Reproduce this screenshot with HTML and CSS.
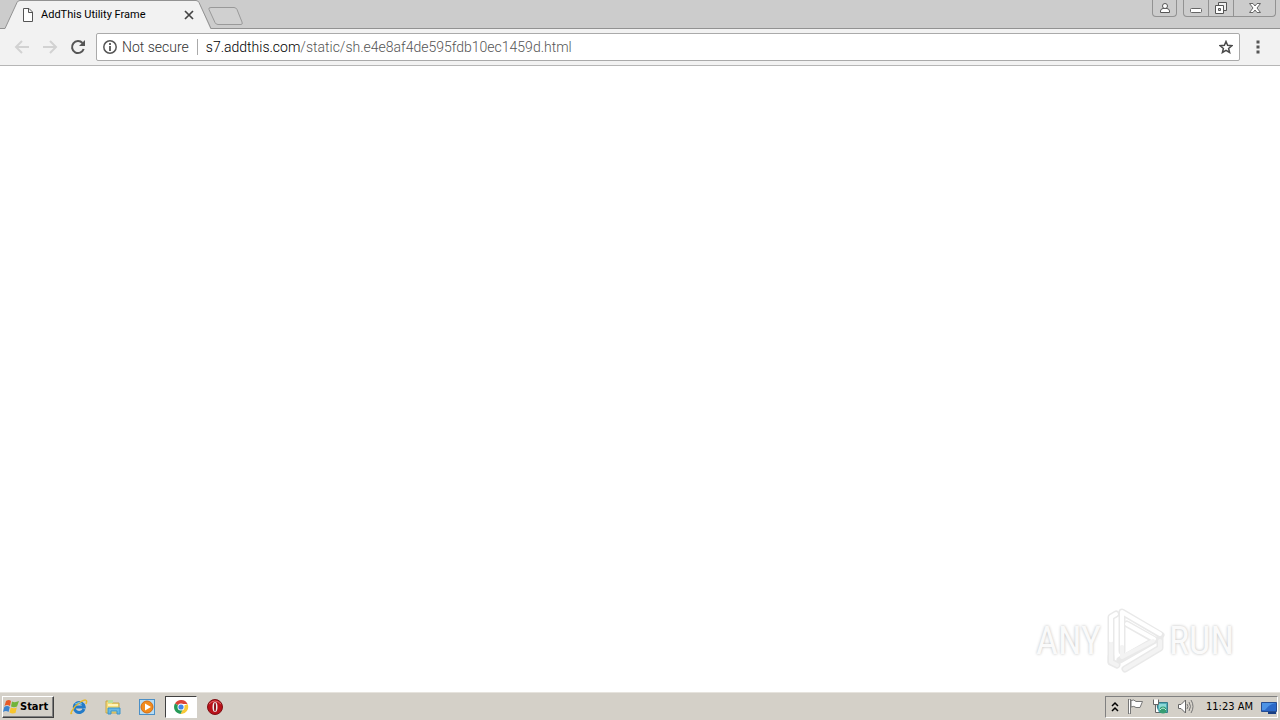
FILE: index.html
```html
<!DOCTYPE html>
<html lang="en">
<head>
<meta charset="utf-8">
<title>AddThis Utility Frame</title>
<link rel="stylesheet" href="styles.css">
</head>
<body>
<header class="tabstrip">
  <div class="tab">
    <svg class="tab-shape" width="212" height="29" viewBox="0 0 212 29" aria-hidden="true"><path d="M0 29V28.5H5L17 2.5Q18 .5 20 .5H196Q198 .5 199 2.5L210 28.5H212V29Z" fill="#f2f2f2"/><path d="M0 28.5H5L17 2.5Q18 .5 20 .5H196Q198 .5 199 2.5L211 28.5H212" fill="none" stroke="#929292"/><path d="M6 28.5H210" stroke="#f2f2f2"/></svg>
    <svg class="tab-icon" width="12" height="14" viewBox="0 0 12 14" aria-hidden="true"><path d="M1.5 .5H7L10.5 4V13.5H1.5ZM6.5 .5V4.5H10.5" fill="#fff" stroke="#555"/></svg>
    <span class="tab-title">AddThis Utility Frame</span>
    <button class="plain tab-close" aria-label="Close tab"><svg width="10" height="10" viewBox="0 0 10 10"><path d="M1 1L9 9M9 1L1 9" stroke="#444" stroke-width="1.7"/></svg></button>
  </div>
  <button class="plain new-tab" aria-label="New tab"><svg width="36" height="18" viewBox="0 0 36 18"><path d="M3 .5H26Q28 .5 29 2.500L34 15Q35 17.500 33 17.500H10Q8 17.500 7 15.500L1 2.500Q0 .5 3 .5Z" fill="#d0d0d0" stroke="#999"/></svg></button>
  <div class="window-controls">
    <button class="plain profile" aria-label="Profile"><svg width="12" height="12" viewBox="0 0 12 12"><path d="M1.500 10.500V9Q1.500 7 4 6.500H8Q10.500 7 10.500 9V10.500Z" fill="#fff" stroke="#555"/><circle cx="6" cy="4" r="2.500" fill="#fff" stroke="#555"/></svg></button>
    <div class="window-buttons">
      <button class="plain win minimize" aria-label="Minimize"><svg width="12" height="12" viewBox="0 0 12 12"><rect x=".5" y="6.500" width="11" height="4" rx="1" fill="#fff" stroke="#666"/></svg></button>
      <button class="plain win restore" aria-label="Restore"><svg width="14" height="14" viewBox="0 0 14 14"><path d="M4.500 1.500H12.500V9.500H4.500Z" fill="#eee" stroke="#555"/><path d="M1.500 4.500H9.500V12.500H1.500Z" fill="#fff" stroke="#555"/><path d="M4.500 7.500H6.500V9.500H4.500Z" fill="#ccc" stroke="#555"/></svg></button>
      <button class="plain win close" aria-label="Close"><svg width="12" height="12" viewBox="0 0 12 12"><path d="M.5 1.500H4L6 4L8 1.500H11.500L8 6L11.500 10.500H8L6 8L4 10.500H.5L4 6Z" fill="#fff" stroke="#666"/></svg></button>
    </div>
  </div>
</header>
<nav class="toolbar" aria-label="Browser toolbar">
  <button class="plain nav-btn" aria-label="Back" disabled><svg width="16" height="16" viewBox="0 0 16 16"><path d="M15 8H2M8 2L2 8L8 14" fill="none" stroke="#d2d2d2" stroke-width="2"/></svg></button>
  <button class="plain nav-btn" aria-label="Forward" disabled><svg width="16" height="16" viewBox="0 0 16 16"><path d="M1 8H14M8 2L14 8L8 14" fill="none" stroke="#d2d2d2" stroke-width="2"/></svg></button>
  <button class="plain nav-btn" aria-label="Reload"><svg width="16" height="16" viewBox="0 0 16 16"><path d="M12.500 4A6 6 0 1 0 13.700 10" fill="none" stroke="#555" stroke-width="2"/><path d="M15 1V7H9Z" fill="#555"/></svg></button>
  <div class="address">
    <svg width="14" height="14" viewBox="0 0 14 14" aria-hidden="true"><circle cx="7" cy="7" r="6.200" fill="none" stroke="#555" stroke-width="1.500"/><path d="M7 6V11M7 3V5" stroke="#555" stroke-width="1.800"/></svg>
    <span class="secure">Not secure</span>
    <a class="url" href="#"><span class="host">s7.addthis.com</span>/static/sh.e4e8af4de595fdb10ec1459d.html</a>
    <button class="plain star" aria-label="Bookmark"><svg width="14" height="14" viewBox="0 0 14 14"><path d="M7 1.500L8.600 5.300L12.800 5.700L9.600 8.400L10.600 12.500L7 10.300L3.400 12.500L4.400 8.400L1.200 5.700L5.400 5.300Z" fill="none" stroke="#4a4a4a" stroke-width="1.500"/></svg></button>
  </div>
  <button class="plain menu" aria-label="Menu"><svg width="4" height="14" viewBox="0 0 4 14"><path d="M.5 .5H3.500V3.500H.5ZM.5 5.500H3.500V8.500H.5ZM.5 10.500H3.500V13.500H.5Z" fill="#555"/></svg></button>
</nav>
<main class="page">
  <div class="watermark">
    <span>ANY</span>
    <svg width="60" height="68" viewBox="0 0 60 68" aria-hidden="true">
      <g fill="none" stroke-linejoin="round" stroke-linecap="round">
        <g stroke="#e9e9e9" stroke-width="7"><path d="M6 55V10L11 7M17 44V5L56 28"/><path d="M22 17L50 33L15 53M20 62L55 41V30M6 50V55L12 58"/></g>
        <g stroke="#fff" stroke-width="4"><path d="M6 34V10L11 7M17 38V5L55 27M22 17L49 32"/></g>
        <g stroke="#f3f3f3" stroke-width="4"><path d="M6 37V55L12 58M17 40V50L48 34M20 62L55 41V34"/></g>
      </g>
    </svg>
    <span>RUN</span>
  </div>
</main>
<footer class="taskbar">
  <button class="start"><svg width="17" height="16" viewBox="0 0 17 16" aria-hidden="true"><path d="M3 2Q6 0 8 2L7 7Q4 5 1.500 7Z" fill="#e75b28"/><path d="M9 2.500Q12 4 16 2L14 7.500Q11 9 8 7.500Z" fill="#72b43a"/><path d="M1.300 8Q4 6 6.800 8L5.500 13Q3 11 0 13Z" fill="#3b83cf"/><path d="M7.800 8.500Q11 10 13.800 8.500L12.500 14Q9 15 6.500 13.500Z" fill="#f7c52d"/></svg><span>Start</span></button>
  <div class="launchers">
    <button class="plain task" aria-label="Internet Explorer"><svg width="18" height="18" viewBox="0 0 18 18"><path d="M14 11A5 5 0 1 1 14.200 9H5" fill="none" stroke="#237bc8" stroke-width="3"/><path d="M2 15C-1 18 3 9 9 5S18 1 16 6" fill="none" stroke="#e7b92c" stroke-width="1.500"/><path d="M5 6Q9 3 12 6" fill="none" stroke="#71c6ef"/></svg></button>
    <button class="plain task" aria-label="File Explorer"><svg width="18" height="18" viewBox="0 0 18 18"><path d="M2 3H7L8 5H15V15H2Z" fill="#f4dc78" stroke="#c7a647"/><path d="M4 2H9V5H4Z" fill="#b9dda0"/><path d="M4 16V10H16V16H13V13H7V16Z" fill="#67b8e6" stroke="#3b94c9"/><path d="M4 7H14" stroke="#fff4b8" stroke-width="2"/></svg></button>
    <button class="plain task" aria-label="Media Player"><svg width="18" height="18" viewBox="0 0 18 18"><rect x="1.500" y="1.500" width="15" height="15" fill="#b6dcf4" stroke="#4b8fc6"/><circle cx="9" cy="9" r="6" fill="#f28b1c" stroke="#d46b10"/><path d="M7 5.500L13 9L7 12.500Z" fill="#fff"/></svg></button>
    <button class="plain task active" aria-label="Chrome"><svg width="16" height="16" viewBox="0 0 16 16"><path d="M8 8L2 4.500A7 7 0 0 1 14.500 5H8Z" fill="#dc4437"/><path d="M8 8L14.500 5A7 7 0 0 1 7.500 15L10.500 9Z" fill="#f8c936"/><path d="M8 8L2 4.500A7 7 0 0 0 7.500 15L10.500 9Z" fill="#269a57"/><circle cx="8" cy="8" r="3.500" fill="#fff"/><circle cx="8" cy="8" r="2.600" fill="#4285e8"/></svg></button>
    <button class="plain task" aria-label="Opera"><svg width="18" height="18" viewBox="0 0 18 18"><circle cx="9" cy="9" r="7.500" fill="#b91119" stroke="#7e1015"/><path d="M3 6Q9 0 15 6" fill="none" stroke="#e26568"/><ellipse cx="9" cy="9" rx="2.500" ry="5" fill="#eee"/><ellipse cx="9" cy="9" rx="1" ry="4.500" fill="#8a1219"/></svg></button>
  </div>
  <div class="tray">
    <button class="plain" aria-label="Show hidden icons"><svg width="8" height="12" viewBox="0 0 8 12"><path d="M1 5L4 2L7 5M1 10L4 7L7 10" fill="none" stroke="#000" stroke-width="1.500"/></svg></button>
    <button class="plain" aria-label="Action Center"><svg width="17" height="17" viewBox="0 0 17 17"><path d="M2.500 1V16" stroke="#777" stroke-width="3"/><path d="M2.500 1.500V15.500" stroke="#fff"/><path d="M4 2.500Q7 1 9 3.500H15.500L13 9.500H9Q7 7.500 4 9Z" fill="#fff" stroke="#777"/></svg></button>
    <button class="plain" aria-label="Network"><svg width="17" height="17" viewBox="0 0 17 17"><path d="M5.500 4.500H15.500V14.500H5.500Z" fill="#54aeb9" stroke="#367d8a"/><path d="M7 6H14V12H7Z" fill="#8cdad7"/><path d="M1.500 1.500V6.500H6.500V1.500M3.500 6.500V14.500H7" fill="#fff" stroke="#666"/><circle cx="11" cy="12" r="3.500" fill="#369d72"/><path d="M8 12Q11 8 14 12" fill="none" stroke="#c5eee0"/></svg></button>
    <button class="plain" aria-label="Volume"><svg width="17" height="17" viewBox="0 0 17 17"><path d="M1.500 6.500H4L8.500 2V15L4 10.500H1.500Z" fill="#fff" stroke="#666"/><path d="M10 6Q12 8.500 10 11M12 4Q15 8.500 12 13M14 2Q18 8.500 14 15" fill="none" stroke="#777"/></svg></button>
    <time datetime="11:23">11:23 AM</time>
    <button class="plain" aria-label="Show desktop"><svg width="16" height="14" viewBox="0 0 16 14"><path d="M.5 2.500H15.500V11.500H.5Z" fill="#2c69c8" stroke="#264d91"/><path d="M1 3H15Q8 4 4 10H1Z" fill="#4d93e5"/><path d="M7 13H15" stroke="#183e83" stroke-width="2"/></svg></button>
  </div>
</footer>
</body>
</html>
```
FILE: styles.css
```css
* { box-sizing: border-box; }
body { margin: 0; min-height: 100vh; display: flex; flex-direction: column; background: #fff; color: #000; font: 11px/16px "DejaVu Sans Condensed", "Noto Sans", sans-serif; }
svg { display: block; flex: none; }
.plain { appearance: none; border: 0; padding: 0; background: none; display: flex; align-items: center; justify-content: center; }
.tabstrip { display: flex; height: 29px; background: #ccc; border-bottom: 1px solid #929292; }
.tab { position: relative; width: 212px; height: 29px; display: flex; align-items: center; gap: 7px; padding: 0 18px 0 22px; }
.tab-shape { position: absolute; inset: 0; }
.tab-icon, .tab-title, .tab-close { position: relative; }
.tab-title { flex: 1; white-space: nowrap; font-family: Roboto, sans-serif; }
.new-tab { align-self: flex-start; padding-top: 7px; margin-left: -4px; }
.window-controls { margin-left: auto; display: flex; align-items: flex-start; gap: 6px; padding-right: 4px; }
.profile { width: 25px; height: 17px; border: 1px solid #929292; border-top: 0; border-radius: 0 0 4px 4px; }
.window-buttons { display: flex; border: 1px solid #929292; border-top: 0; border-radius: 0 0 4px 4px; }
.win { height: 16px; }
.minimize { width: 24px; }
.restore { width: 26px; border: solid #929292; border-width: 0 1px; }
.close { width: 41px; }
.toolbar { display: flex; align-items: center; height: 37px; padding: 0 20px 0 14px; background: #f2f2f2; border-bottom: 1px solid #b6b6b6; }
.nav-btn { width: 16px; margin-right: 12px; }
.nav-btn:nth-child(3) { margin-right: 10px; }
.address { flex: 1; min-width: 0; display: flex; align-items: center; height: 28px; padding: 0 6px; border: 1px solid #aaa; border-radius: 2px; background: #fff; font: 300 14px/20px Roboto, sans-serif; white-space: nowrap; }
.secure { color: #333; padding: 0 8px 0 5px; border-right: 1px solid #aaa; line-height: 16px; }
.url { color: #555; text-decoration: none; margin-left: 8px; }
.host { color: #000; }
.star { margin-left: auto; }
.menu { margin-left: 16px; width: 4px; }
.page { flex: 1; display: flex; justify-content: flex-end; align-items: flex-end; padding: 0 46px 17px; }
.watermark { display: flex; align-items: center; gap: 4px; color: #fafafa; font: 38px/48px "Roboto Condensed", "Liberation Sans Narrow", Roboto, sans-serif; text-shadow: 0 0 3px #bbb; }
.taskbar { display: flex; align-items: center; height: 28px; background: #d4d0c8; border-top: 1px solid #e6e3dd; padding: 0 2px; }
.start { display: flex; align-items: center; width: 52px; height: 22px; padding: 0; color: #000; background: #d4d0c8; border: 1px solid; border-color: #fff #404040 #404040 #fff; box-shadow: inset -1px -1px #808080; font: bold 11px/16px "DejaVu Sans Condensed", sans-serif; }
.launchers { display: flex; gap: 2px; margin-left: 9px; }
.task { width: 32px; height: 22px; }
.active { background: #fff; border: 1px solid; border-color: #404040 #fff #fff #404040; }
.tray { display: flex; align-items: center; gap: 8px; height: 22px; margin-left: auto; padding: 0 0 0 5px; border: 1px solid; border-color: #808080 #fff #fff #808080; }
.tray time { padding-left: 4px; white-space: nowrap; }
```
